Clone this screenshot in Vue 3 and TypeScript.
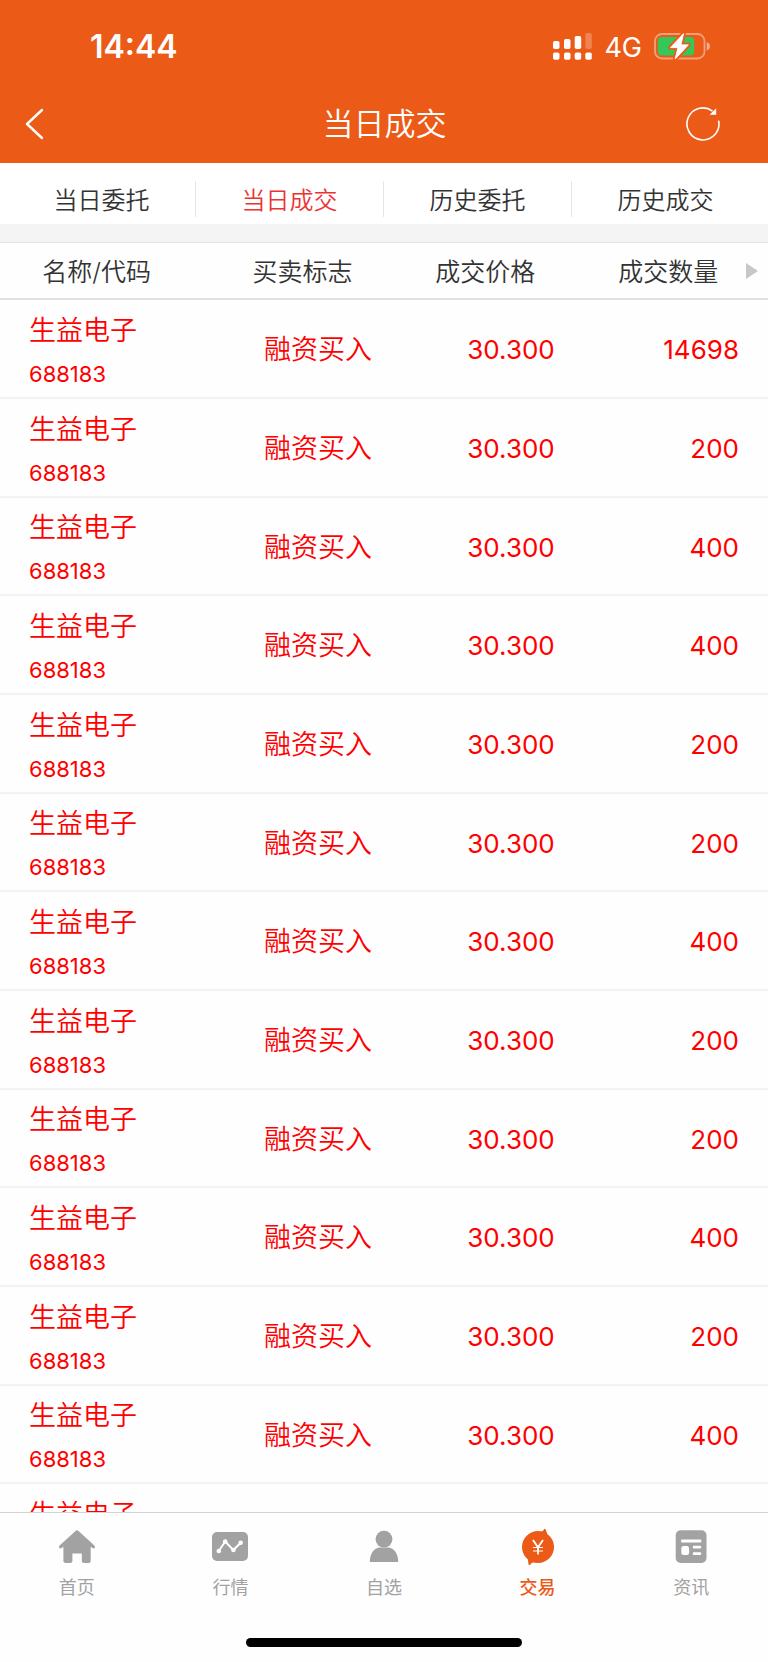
<script setup lang="ts">
import { ref } from 'vue'

interface Trade {
  name: string
  code: string
  side: string
  price: string
  amount: number
}

const tabs = ['当日委托', '当日成交', '历史委托', '历史成交']
const activeTab = ref(1)

const columns = ['名称/代码', '买卖标志', '成交价格', '成交数量']

const amounts = [14698, 200, 400, 400, 200, 200, 400, 200, 200, 400, 200, 400, 200]
const trades: Trade[] = amounts.map((amount) => ({
  name: '生益电子',
  code: '688183',
  side: '融资买入',
  price: '30.300',
  amount,
}))

const menu = [
  { id: 'home', label: '首页' },
  { id: 'market', label: '行情' },
  { id: 'watch', label: '自选' },
  { id: 'trade', label: '交易' },
  { id: 'news', label: '资讯' },
]
const activeMenu = ref('trade')
</script>

<template>
  <div class="page">
    <header class="top">
      <div class="status">
        <span class="time">14:44</span>
        <div class="indicators">
          <svg class="signal" width="39" height="27" viewBox="0 0 39 27" fill="#fff" aria-hidden="true">
            <rect x="0" y="8" width="6.5" height="8" rx="1.8" />
            <rect x="11" y="6" width="6.5" height="10" rx="1.8" />
            <rect x="21.7" y="3" width="6.5" height="13" rx="1.8" />
            <rect x="32.3" y="0" width="6.5" height="16" rx="1.8" opacity=".25" />
            <rect x="0" y="19.5" width="6.5" height="7.3" rx="1.8" />
            <rect x="11" y="19.5" width="6.5" height="7.3" rx="1.8" />
            <rect x="21.7" y="19.5" width="6.5" height="7.3" rx="1.8" />
            <rect x="32.3" y="19.5" width="6.5" height="7.3" rx="1.8" />
          </svg>
          <span class="network">4G</span>
          <svg class="battery" width="56" height="28" viewBox="0 0 56 28" aria-hidden="true">
            <rect x="1" y="1" width="49.5" height="24.5" rx="7" fill="none" stroke="#fff" stroke-opacity=".42" stroke-width="1.8" />
            <path d="M52.7 9 Q56 10.3 56 13.3 Q56 16.3 52.7 17.6Z" fill="#fff" fill-opacity=".5" />
            <rect x="3.7" y="4" width="36.5" height="18.5" rx="4" fill="#34c759" />
            <path d="M29.5 .7 L16.5 14.6 H24 L21.2 26 L34.3 11.9 H26.9Z" fill="#fff" stroke="#eb5a17" stroke-width="4.5" stroke-linejoin="round" />
            <path d="M29.5 .7 L16.5 14.6 H24 L21.2 26 L34.3 11.9 H26.9Z" fill="#fff" stroke="#fff" stroke-width="1" stroke-linejoin="round" />
          </svg>
        </div>
      </div>
      <div class="bar">
        <button class="icon-btn" type="button" aria-label="返回">
          <svg width="20" height="34" viewBox="0 0 20 34" fill="none" stroke="#fff" stroke-width="2.4" stroke-linecap="round" stroke-linejoin="round">
            <path d="M18 3 L3 17 L18 31" />
          </svg>
        </button>
        <h1>当日成交</h1>
        <button class="icon-btn" type="button" aria-label="刷新">
          <svg width="36" height="36" viewBox="0 0 36 36" fill="none" stroke="#fff" stroke-width="1.6">
            <path d="M33.6 14.7 A16 16 0 1 1 27.5 5.1" />
            <path d="M31.2 2.2 V8.8 H24.6Z" fill="#fff" stroke="none" />
          </svg>
        </button>
      </div>
    </header>

    <nav class="tabs">
      <button
        v-for="(tab, i) in tabs"
        :key="tab"
        type="button"
        :class="{ active: i === activeTab }"
        @click="activeTab = i"
      >{{ tab }}</button>
    </nav>

    <main class="list">
      <table>
        <thead>
          <tr>
            <th v-for="(column, i) in columns" :key="column" scope="col">
              {{ column }}
              <button v-if="i === columns.length - 1" class="more" type="button" aria-label="更多列">
                <svg width="12" height="16" viewBox="0 0 12 16"><path d="M0 0 L12 8 L0 16Z" fill="#c9c6c6" /></svg>
              </button>
            </th>
          </tr>
        </thead>
        <tbody>
          <tr v-for="(trade, i) in trades" :key="i">
            <td>
              <span class="name">{{ trade.name }}</span>
              <span class="code">{{ trade.code }}</span>
            </td>
            <td>{{ trade.side }}</td>
            <td class="number">{{ trade.price }}</td>
            <td class="number">{{ trade.amount }}</td>
          </tr>
        </tbody>
      </table>
    </main>

    <footer class="bottom">
      <nav class="menu">
        <a
          v-for="item in menu"
          :key="item.id"
          href="#"
          :class="{ active: item.id === activeMenu }"
          @click.prevent="activeMenu = item.id"
        >
          <svg width="40" height="40" viewBox="0 0 40 40" fill="currentColor" aria-hidden="true">
            <path
              v-if="item.id === 'home'"
              d="M18.8 3.7 Q20 2.6 21.2 3.7 L37.4 18.4 Q38.6 19.7 37.6 21 Q36.8 21.8 35.4 20.9 L33.7 19.7 V34 Q33.7 36 31.7 36 H27 Q24.8 36 24.8 34 V26.4 H15.4 V34 Q15.4 36 13.2 36 H8.5 Q6.4 36 6.4 34 V19.7 L4.6 20.9 Q3.2 21.8 2.4 21 Q1.4 19.7 2.6 18.4Z"
            />
            <g v-else-if="item.id === 'market'">
              <rect x="2" y="5" width="36" height="29" rx="5" />
              <path d="M8.8 24 L15.2 14.5 L23.4 23 L30.7 15.7" fill="none" stroke="#fff" stroke-width="2" />
              <g fill="#fff">
                <circle cx="8.8" cy="24" r="2.3" />
                <circle cx="15.2" cy="14.5" r="2.3" />
                <circle cx="23.4" cy="23" r="2.3" />
                <circle cx="30.7" cy="15.7" r="2.3" />
              </g>
            </g>
            <g v-else-if="item.id === 'watch'">
              <circle cx="20" cy="12.2" r="8.4" />
              <path d="M5.8 35 C5.8 26 10.5 21 15.8 20.6 H24.2 C29.5 21 34.2 26 34.2 35Z" />
            </g>
            <g v-else-if="item.id === 'trade'">
              <circle cx="20" cy="20" r="16" />
              <path d="M22.3 5 Q25.2 4.7 26 2.2 Q27 1.2 27.8 2.8 L29.6 8Z M17.7 35 Q13.5 35 12.3 37.8 Q11.2 38.8 10.5 37.2 L9.7 31Z" />
              <g fill="none" stroke="#fff">
                <path d="M15 13 L20 20.3 L25 13 M20 20 V27.6" stroke-width="1.8" />
                <path d="M15 20.5 H25 M15 24 H25" stroke-width="1" />
              </g>
            </g>
            <g v-else>
              <rect x="4.7" y="3.3" width="30.8" height="32.6" rx="5" />
              <g fill="#fff">
                <rect x="10" y="12.4" width="20.3" height="3" rx="1" />
                <rect x="10.3" y="19" width="7.8" height="9" rx="2.5" />
                <rect x="21.8" y="18.7" width="8.4" height="2.7" rx="1" />
                <rect x="21.8" y="25.3" width="8.4" height="2.7" rx="1" />
              </g>
            </g>
          </svg>
          <span>{{ item.label }}</span>
        </a>
      </nav>
      <div class="home-indicator"></div>
    </footer>
  </div>
</template>

<style>
body {
  margin: 0;
  background: #fefefe;
}
</style>

<style scoped>
.page {
  display: flex;
  flex-direction: column;
  height: 100vh;
  overflow: hidden;
  color: #333;
  font-family: Inter, "Noto Sans CJK SC", sans-serif;
  font-weight: 350;
}

button {
  margin: 0;
  padding: 0;
  border: 0;
  background: none;
  color: inherit;
  font: inherit;
  cursor: pointer;
}

svg {
  display: block;
}

.top {
  flex: none;
  background: #eb5a17;
  color: #fff;
}

.status {
  display: flex;
  align-items: center;
  justify-content: space-between;
  height: 84px;
  padding: 9px 58px 0 90px;
  box-sizing: border-box;
}

.time {
  font-size: 32px;
  font-weight: 600;
  line-height: 40px;
}

.indicators {
  display: flex;
  align-items: center;
}

.network {
  margin: 0 12px;
  padding-top: 2px;
  font-size: 27px;
  font-weight: 400;
  line-height: 32px;
}

.bar {
  display: flex;
  align-items: center;
  justify-content: space-between;
  height: 79px;
  padding: 0 47px 0 24px;
}

.icon-btn {
  display: flex;
  width: 36px;
}

h1 {
  margin: 0 0 0 24px;
  font-size: 31px;
  font-weight: 350;
  line-height: 40px;
}

.tabs {
  display: flex;
  flex: none;
  align-items: center;
  height: 61px;
  padding: 10px 8px 0 8px;
  box-sizing: border-box;
  background: #fff;
}

.tabs button {
  flex: 1;
  height: 36px;
  padding-top: 2px;
  border-right: 1px solid #e6e6e6;
  font-size: 24px;
  line-height: 36px;
}

.tabs button:last-child {
  border-right-color: transparent;
}

.tabs .active {
  color: #ec3232;
}

.list {
  flex: 1;
  min-height: 0;
  overflow: hidden;
  border-top: 18px solid #f4f4f4;
}

table {
  width: 100%;
  table-layout: fixed;
  border-collapse: separate;
  border-spacing: 0;
}

th {
  position: relative;
  height: 58px;
  width: 23.8%;
  padding: 2px 0 0;
  box-sizing: border-box;
  border-top: 1px solid #e3e3e3;
  border-bottom: 2px solid #e0e0e0;
  font-size: 25px;
  font-weight: 350;
  line-height: 36px;
}

th:first-child {
  width: 27.5%;
  padding-right: 18px;
}

th:last-child {
  width: 24.9%;
  padding-right: 8px;
}

.more {
  position: absolute;
  top: 50%;
  right: 10px;
  transform: translateY(-50%);
}

td {
  height: 99px;
  padding: 3px 22px 0 0;
  box-sizing: border-box;
  border-bottom: 2px solid #f3f3f3;
  color: #f00;
  font-size: 27px;
  line-height: 36px;
  text-align: right;
}

tr:nth-child(3n) td {
  height: 98px;
}

td:first-child {
  padding: 8px 0 0 29px;
  text-align: left;
}

td:last-child {
  padding-right: 29px;
}

td.number {
  font-size: 26px;
  font-weight: 400;
}

.name,
.code {
  display: block;
}

.name {
  line-height: 42px;
}

.code {
  font-size: 22px;
  font-weight: 400;
  line-height: 44px;
}

.bottom {
  flex: none;
  padding-bottom: 15px;
  border-top: 1px solid #d4d4d4;
  background: #fefefe;
}

.menu {
  display: flex;
  padding: 14px 0 37px;
}

.menu a {
  display: flex;
  flex: 1;
  flex-direction: column;
  align-items: center;
  gap: 8px;
  color: #a2a2a2;
  font-size: 18px;
  font-weight: 400;
  line-height: 26px;
  text-decoration: none;
}

.menu .active {
  color: #eb5a17;
  font-weight: 500;
}

.home-indicator {
  width: 36%;
  height: 9px;
  margin: 0 auto;
  border-radius: 5px;
  background: #000;
}
</style>
